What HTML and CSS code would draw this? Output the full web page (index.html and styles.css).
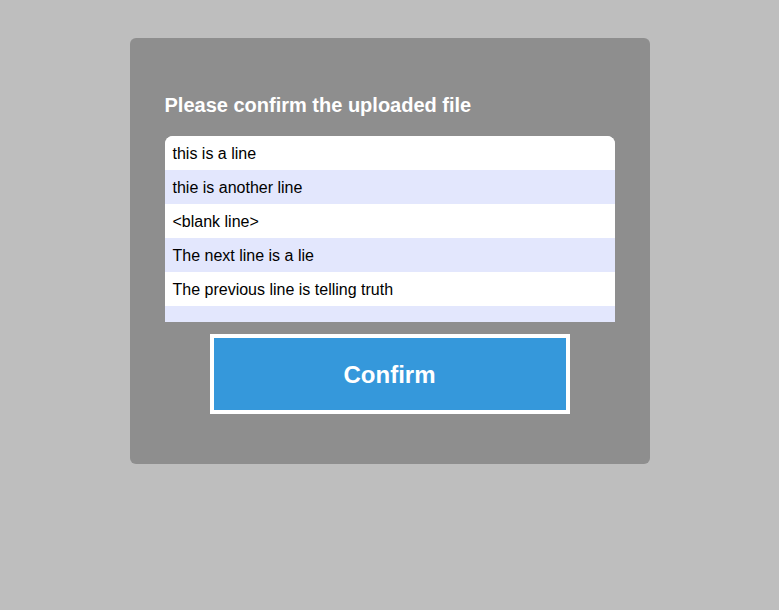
FILE: index.html
```html
<!DOCTYPE html>
<html>
<head>
<meta charset="utf-8">
<link rel="stylesheet" href="styles.css">
</head>
<body>
<div class="panel">
  <h3 class="title">Please confirm the uploaded file</h3>
  <div class="lines">
    <div class="line">this is a line</div>
    <div class="line">thie is another line</div>
    <div class="line">&lt;blank line&gt;</div>
    <div class="line">The next line is a lie</div>
    <div class="line">The previous line is telling truth</div>
    <div class="line"></div>
  </div>
  <button class="confirm">Confirm</button>
</div>
</body>
</html>
```
FILE: styles.css
```css
html, body {
  margin: 0;
  padding: 0;
  background: #bebebe;
  font-family: "Liberation Sans", Arial, sans-serif;
}
.panel {
  width: 520px;
  box-sizing: border-box;
  margin: 38px auto 0;
  padding: 56px 35px 50px;
  background: #8e8e8e;
  border-radius: 6px;
  display: flex;
  flex-direction: column;
}
.title {
  margin: 0 0 20px;
  font-size: 20px;
  line-height: 22px;
  font-weight: bold;
  color: #fff;
}
.lines {
  height: 186px;
  overflow: hidden;
  background: #fff;
  border-radius: 8px 8px 0 0;
}
.line {
  height: 33px;
  padding: 1px 8px 0;
  line-height: 34px;
  font-size: 16px;
  color: #000;
  background: #fff;
}
.line:nth-child(even) {
  background: #e3e7fd;
}
.confirm {
  align-self: center;
  margin-top: 12px;
  width: 360px;
  height: 80px;
  box-sizing: border-box;
  border: 4px solid #fff;
  background: #3598db;
  color: #fff;
  font-family: "Liberation Sans", Arial, sans-serif;
  font-size: 24px;
  font-weight: bold;
  padding: 2px 0 0;
}
```
